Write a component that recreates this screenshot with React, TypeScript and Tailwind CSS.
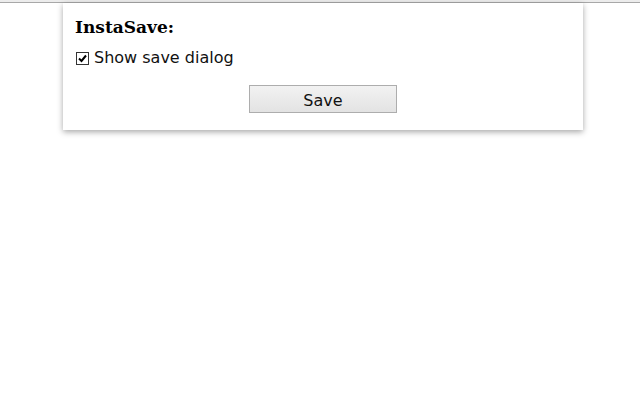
export default function App() {
  return (
    <div className="w-[640px] h-[400px] bg-white overflow-hidden">
      <div className="h-[3px] bg-[#ececec] border-b border-[#a8a8a8]" />
      <div className="ml-[63px] w-[520px] bg-white shadow-[0_2px_6px_rgba(0,0,0,0.35)] px-[12px] pt-[13px] pb-[17px]">
        <h1 className="font-['DejaVu_Serif',serif] font-bold text-[17px] leading-[22px] text-black">
          InstaSave:
        </h1>
        <label className="mt-[10px] flex items-center gap-[5px] font-['DejaVu_Sans',sans-serif] text-[16px] leading-[20px] text-[#111]">
          <span className="ml-[1px] w-[13px] h-[13px] border border-[#333] bg-white flex items-center justify-center">
            <svg width="11" height="11" viewBox="0 0 11 11">
              <path d="M2 5.5 L4.5 8 L9 2.5" fill="none" stroke="#000" strokeWidth="2" />
            </svg>
          </span>
          Show save dialog
        </label>
        <div className="mt-[17px] flex justify-center">
          <button
            type="button"
            className="w-[148px] h-[28px] pt-[3px] border border-[#adadad] bg-gradient-to-b from-[#f2f2f2] to-[#e3e3e3] font-['DejaVu_Sans',sans-serif] text-[16px] leading-[20px] text-[#111]"
          >
            Save
          </button>
        </div>
      </div>
    </div>
  );
}
